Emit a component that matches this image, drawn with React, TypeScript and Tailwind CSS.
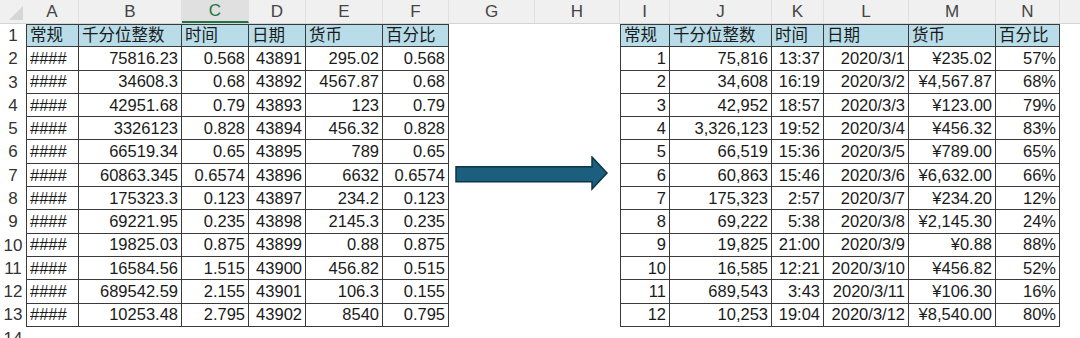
import React from 'react';

const FONT = { fontFamily: '"Liberation Sans", "Noto Sans CJK SC", sans-serif' };

const headers = ['常规', '千分位整数', '时间', '日期', '货币', '百分比'];

const leftRows = [
  ['####', '75816.23', '0.568', '43891', '295.02', '0.568'],
  ['####', '34608.3', '0.68', '43892', '4567.87', '0.68'],
  ['####', '42951.68', '0.79', '43893', '123', '0.79'],
  ['####', '3326123', '0.828', '43894', '456.32', '0.828'],
  ['####', '66519.34', '0.65', '43895', '789', '0.65'],
  ['####', '60863.345', '0.6574', '43896', '6632', '0.6574'],
  ['####', '175323.3', '0.123', '43897', '234.2', '0.123'],
  ['####', '69221.95', '0.235', '43898', '2145.3', '0.235'],
  ['####', '19825.03', '0.875', '43899', '0.88', '0.875'],
  ['####', '16584.56', '1.515', '43900', '456.82', '0.515'],
  ['####', '689542.59', '2.155', '43901', '106.3', '0.155'],
  ['####', '10253.48', '2.795', '43902', '8540', '0.795'],
];

const rightRows = [
  ['1', '75,816', '13:37', '2020/3/1', '¥235.02', '57%'],
  ['2', '34,608', '16:19', '2020/3/2', '¥4,567.87', '68%'],
  ['3', '42,952', '18:57', '2020/3/3', '¥123.00', '79%'],
  ['4', '3,326,123', '19:52', '2020/3/4', '¥456.32', '83%'],
  ['5', '66,519', '15:36', '2020/3/5', '¥789.00', '65%'],
  ['6', '60,863', '15:46', '2020/3/6', '¥6,632.00', '66%'],
  ['7', '175,323', '2:57', '2020/3/7', '¥234.20', '12%'],
  ['8', '69,222', '5:38', '2020/3/8', '¥2,145.30', '24%'],
  ['9', '19,825', '21:00', '2020/3/9', '¥0.88', '88%'],
  ['10', '16,585', '12:21', '2020/3/10', '¥456.82', '52%'],
  ['11', '689,543', '3:43', '2020/3/11', '¥106.30', '16%'],
  ['12', '10,253', '19:04', '2020/3/12', '¥8,540.00', '80%'],
];

// column widths: A..F, G, H, I..N
const leftW = ['w-[53px]', 'w-[103px]', 'w-[67px]', 'w-[57px]', 'w-[77px]', 'w-[66px]'];
const rightW = ['w-[50px]', 'w-[102px]', 'w-[52px]', 'w-[85px]', 'w-[87px]', 'w-[64px]'];

const letters: [string, string][] = [
  ['A', 'w-[53px]'], ['B', 'w-[103px]'], ['C', 'w-[67px]'], ['D', 'w-[57px]'], ['E', 'w-[77px]'],
  ['F', 'w-[66px]'], ['G', 'w-[86px]'], ['H', 'w-[85px]'], ['I', 'w-[50px]'], ['J', 'w-[102px]'],
  ['K', 'w-[52px]'], ['L', 'w-[85px]'], ['M', 'w-[87px]'], ['N', 'w-[64px]'],
];

const RowNum: React.FC<{ n: number }> = ({ n }) => (
  <div className="w-[26px] shrink-0 flex items-center justify-center text-[17px] text-[#333] bg-white">{n}</div>
);

const TableCells: React.FC<{ cells: string[]; widths: string[]; head?: boolean; textFirst?: boolean }> = ({
  cells,
  widths,
  head,
  textFirst,
}) => (
  <>
    {cells.map((c, i) => {
      const left = head || (textFirst && i === 0);
      return (
        <div
          key={i}
          className={`${widths[i]} shrink-0 border-r border-b border-[#3a3a3a] flex items-center whitespace-nowrap overflow-hidden ${
            i === 0 ? 'border-l' : ''
          } ${head ? 'border-t bg-[#b8dde9] text-[16.5px]' : ''} ${left ? 'justify-start pl-[3px]' : 'justify-end pr-[3px]'}`}
        >
          {c}
        </div>
      );
    })}
  </>
);

export default function App() {
  return (
    <div className="relative w-[1080px] h-[338px] overflow-hidden bg-white text-[16.5px] text-[#1a1a1a]" style={FONT}>
      {/* column letters */}
      <div className="flex h-[24px] bg-[#f0f0f0] border-b border-[#d4d4d4] text-[17px] text-[#444]">
        <div className="w-[26px] shrink-0 relative">
          <div className="absolute right-[3px] bottom-[3px] w-0 h-0 border-l-[14px] border-l-transparent border-b-[14px] border-b-[#d6d6d6]" />
        </div>
        {letters.map(([l, w]) => (
          <div
            key={l}
            className={`${w} shrink-0 flex items-center justify-center border-r border-[#e0e0e0] ${
              l === 'C' ? 'bg-[#e0e0e0] text-[#217346] border-b-2 border-b-[#217346]' : ''
            }`}
          >
            {l}
          </div>
        ))}
        <div className="flex-1" />
      </div>

      {/* row 1 */}
      <div className="flex h-[23.3px]">
        <RowNum n={1} />
        <TableCells cells={headers} widths={leftW} head />
        <div className="w-[86px] shrink-0" />
        <div className="w-[85px] shrink-0" />
        <TableCells cells={headers} widths={rightW} head />
      </div>

      {leftRows.map((r, i) => (
        <div key={i} className="flex h-[23.3px]">
          <RowNum n={i + 2} />
          <TableCells cells={r} widths={leftW} textFirst />
          <div className="w-[86px] shrink-0" />
          <div className="w-[85px] shrink-0" />
          <TableCells cells={rightRows[i]} widths={rightW} />
        </div>
      ))}

      <div className="flex h-[23.3px]">
        <RowNum n={14} />
      </div>

      {/* arrow shape floating over the sheet */}
      <svg className="absolute left-[455px] top-[156px]" width="155" height="35" viewBox="0 0 155 35">
        <polygon
          points="1,10.7 137,10.7 137,1 152,17 137,33 137,25.7 1,25.7"
          fill="#1b5e7d"
          stroke="#0e3446"
          strokeWidth="1.5"
          strokeLinejoin="miter"
        />
      </svg>
    </div>
  );
}
